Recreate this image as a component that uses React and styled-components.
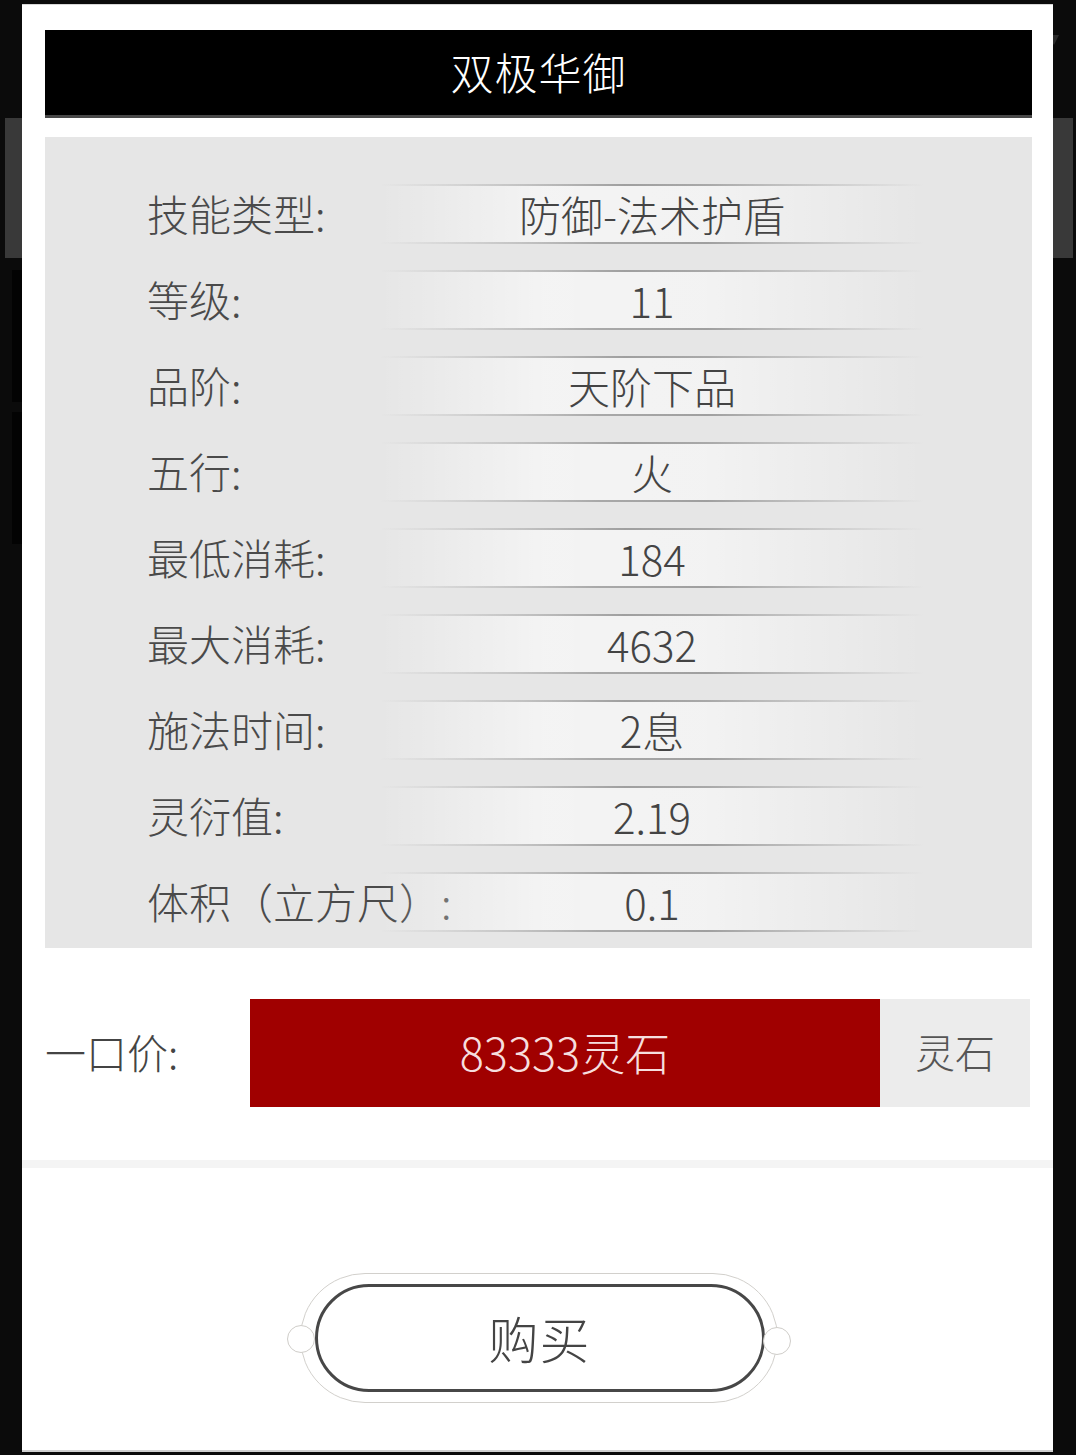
import React from 'react';
import styled, { createGlobalStyle } from 'styled-components';

const GlobalStyle = createGlobalStyle`
  html, body {
    margin: 0;
    padding: 0;
    background: #0b0b0b;
  }
  body {
    font-family: "Noto Sans CJK SC", "Noto Sans", sans-serif;
  }
  * { box-sizing: border-box; }
`;

const skill = {
  name: '双极华御',
  price: '83333灵石',
  unit: '灵石',
  attrs: [
    ['技能类型:', '防御-法术护盾'],
    ['等级:', '11'],
    ['品阶:', '天阶下品'],
    ['五行:', '火'],
    ['最低消耗:', '184'],
    ['最大消耗:', '4632'],
    ['施法时间:', '2息'],
    ['灵衍值:', '2.19'],
    ['体积（立方尺）:', '0.1'],
  ],
};

// page that sits behind the dialog
const Page = styled.div`
  position: relative;
  width: 1076px;
  height: 1455px;
  overflow: hidden;
  background: #0b0b0b;
`;

const PageHeader = styled.div`
  height: 118px;
  display: flex;
  justify-content: flex-end;
  align-items: flex-start;
  padding: 34px 16px 0 0;
`;

const PageBanner = styled.div`
  height: 140px;
  margin: 0 3px 0 5px;
  background: #393939;
`;

const PageList = styled.div`
  display: flex;
  flex-direction: column;
  gap: 10px;
  padding: 12px 0 0 12px;
`;

const PageCard = styled.div`
  width: 200px;
  height: 132px;
  background: #030303;
`;

const Dialog = styled.div`
  position: absolute;
  top: 4px;
  left: 22px;
  width: 1031px;
  height: 1448px;
  background: #fff;
  border-top: 1px solid #d8d8d8;
  border-bottom: 2px solid #cfcfcf;
  padding-top: 25px;
  display: flex;
  flex-direction: column;
`;

const TitleBar = styled.div`
  margin: 0 21px 0 23px;
  height: 88px;
  background: #000;
  border-bottom: 3px solid #484848;
  display: flex;
  align-items: center;
  justify-content: center;
  color: #fff;
  font-size: 43px;
  font-weight: 300;
  letter-spacing: 1px;
  padding-bottom: 4px;
`;

const InfoPanel = styled.div`
  margin: 19px 21px 0 23px;
  height: 811px;
  background: #e6e6e6;
  padding: 47px 0 0 102px;
  display: flex;
  flex-direction: column;
  gap: 26px;
`;

const Row = styled.div`
  display: flex;
  align-items: center;
  height: 60px;
`;

const Label = styled.div`
  width: 233px;
  flex: none;
  font-size: 42px;
  font-weight: 300;
  color: #4a4a4a;
  white-space: nowrap;
  line-height: 60px;
  padding-bottom: 2px;
`;

const Value = styled.div`
  width: 544px;
  height: 60px;
  display: flex;
  align-items: center;
  justify-content: center;
  font-size: 42px;
  font-weight: 300;
  color: #444;
  padding-bottom: 2px;
  background:
    linear-gradient(to right, rgba(150,150,150,0), rgba(150,150,150,0.9) 45%, rgba(150,150,150,0.8) 60%, rgba(150,150,150,0)) top / 100% 2px no-repeat,
    linear-gradient(to right, rgba(150,150,150,0), rgba(150,150,150,0.8) 40%, rgba(150,150,150,0.9) 60%, rgba(150,150,150,0)) bottom / 100% 2px no-repeat,
    linear-gradient(to right, rgba(255,255,255,0), rgba(255,255,255,0.55) 30%, rgba(255,255,255,0.5) 60%, rgba(255,255,255,0));
`;

const PriceRow = styled.div`
  margin: 51px 23px 0 23px;
  height: 108px;
  display: flex;
  align-items: stretch;
`;

const PriceLabel = styled.div`
  width: 205px;
  flex: none;
  display: flex;
  align-items: center;
  font-size: 41px;
  font-weight: 300;
  color: #444;
  padding-bottom: 4px;
`;

const PriceBox = styled.div`
  width: 630px;
  background: #a00000;
  display: flex;
  align-items: center;
  justify-content: center;
  color: #f6dede;
  font-size: 45px;
  font-weight: 300;
  padding-bottom: 4px;
`;

const UnitBox = styled.div`
  width: 150px;
  background: #ececec;
  display: flex;
  align-items: center;
  justify-content: center;
  color: #555;
  font-size: 40px;
  font-weight: 300;
  padding-bottom: 4px;
`;

const Divider = styled.div`
  margin-top: 53px;
  height: 8px;
  background: #f4f4f4;
`;

const ButtonArea = styled.div`
  display: flex;
  justify-content: center;
  padding: 105px 0 0 2px;
`;

const ButtonRing = styled.div`
  position: relative;
  width: 478px;
  height: 130px;
  border: 1.5px solid #d2d0cc;
  border-radius: 65px;
  padding: 10px 13px 0 14px;

  &::before, &::after {
    content: '';
    position: absolute;
    top: 51px;
    width: 26px;
    height: 26px;
    border-radius: 50%;
    border: 1.5px solid #cfcdc9;
    background: #fff;
  }
  &::before { left: -14px; }
  &::after { right: -14px; top: 53px; }
`;

const BuyButton = styled.button`
  width: 450px;
  height: 108px;
  border: 3px solid #474747;
  border-radius: 54px;
  background: #fff;
  display: flex;
  align-items: center;
  justify-content: center;
  font-family: "Noto Sans CJK SC", "Noto Sans", sans-serif;
  font-size: 50px;
  font-weight: 300;
  color: #444;
  letter-spacing: 1px;
  cursor: pointer;
  padding: 0 0 2px 0;
`;

function Caret() {
  return (
    <svg width="14" height="12" viewBox="0 0 14 12">
      <path d="M1 1 L13 1 L8 11 Z" fill="#2a2a2a" />
    </svg>
  );
}

export default function App() {
  return (
    <Page>
      <GlobalStyle />
      <PageHeader>
        <Caret />
      </PageHeader>
      <PageBanner />
      <PageList>
        <PageCard />
        <PageCard />
      </PageList>

      <Dialog>
        <TitleBar>{skill.name}</TitleBar>
        <InfoPanel>
          {skill.attrs.map(([label, value]) => (
            <Row key={label}>
              <Label>{label}</Label>
              <Value>{value}</Value>
            </Row>
          ))}
        </InfoPanel>
        <PriceRow>
          <PriceLabel>一口价:</PriceLabel>
          <PriceBox>{skill.price}</PriceBox>
          <UnitBox>{skill.unit}</UnitBox>
        </PriceRow>
        <Divider />
        <ButtonArea>
          <ButtonRing>
            <BuyButton>购买</BuyButton>
          </ButtonRing>
        </ButtonArea>
      </Dialog>
    </Page>
  );
}
